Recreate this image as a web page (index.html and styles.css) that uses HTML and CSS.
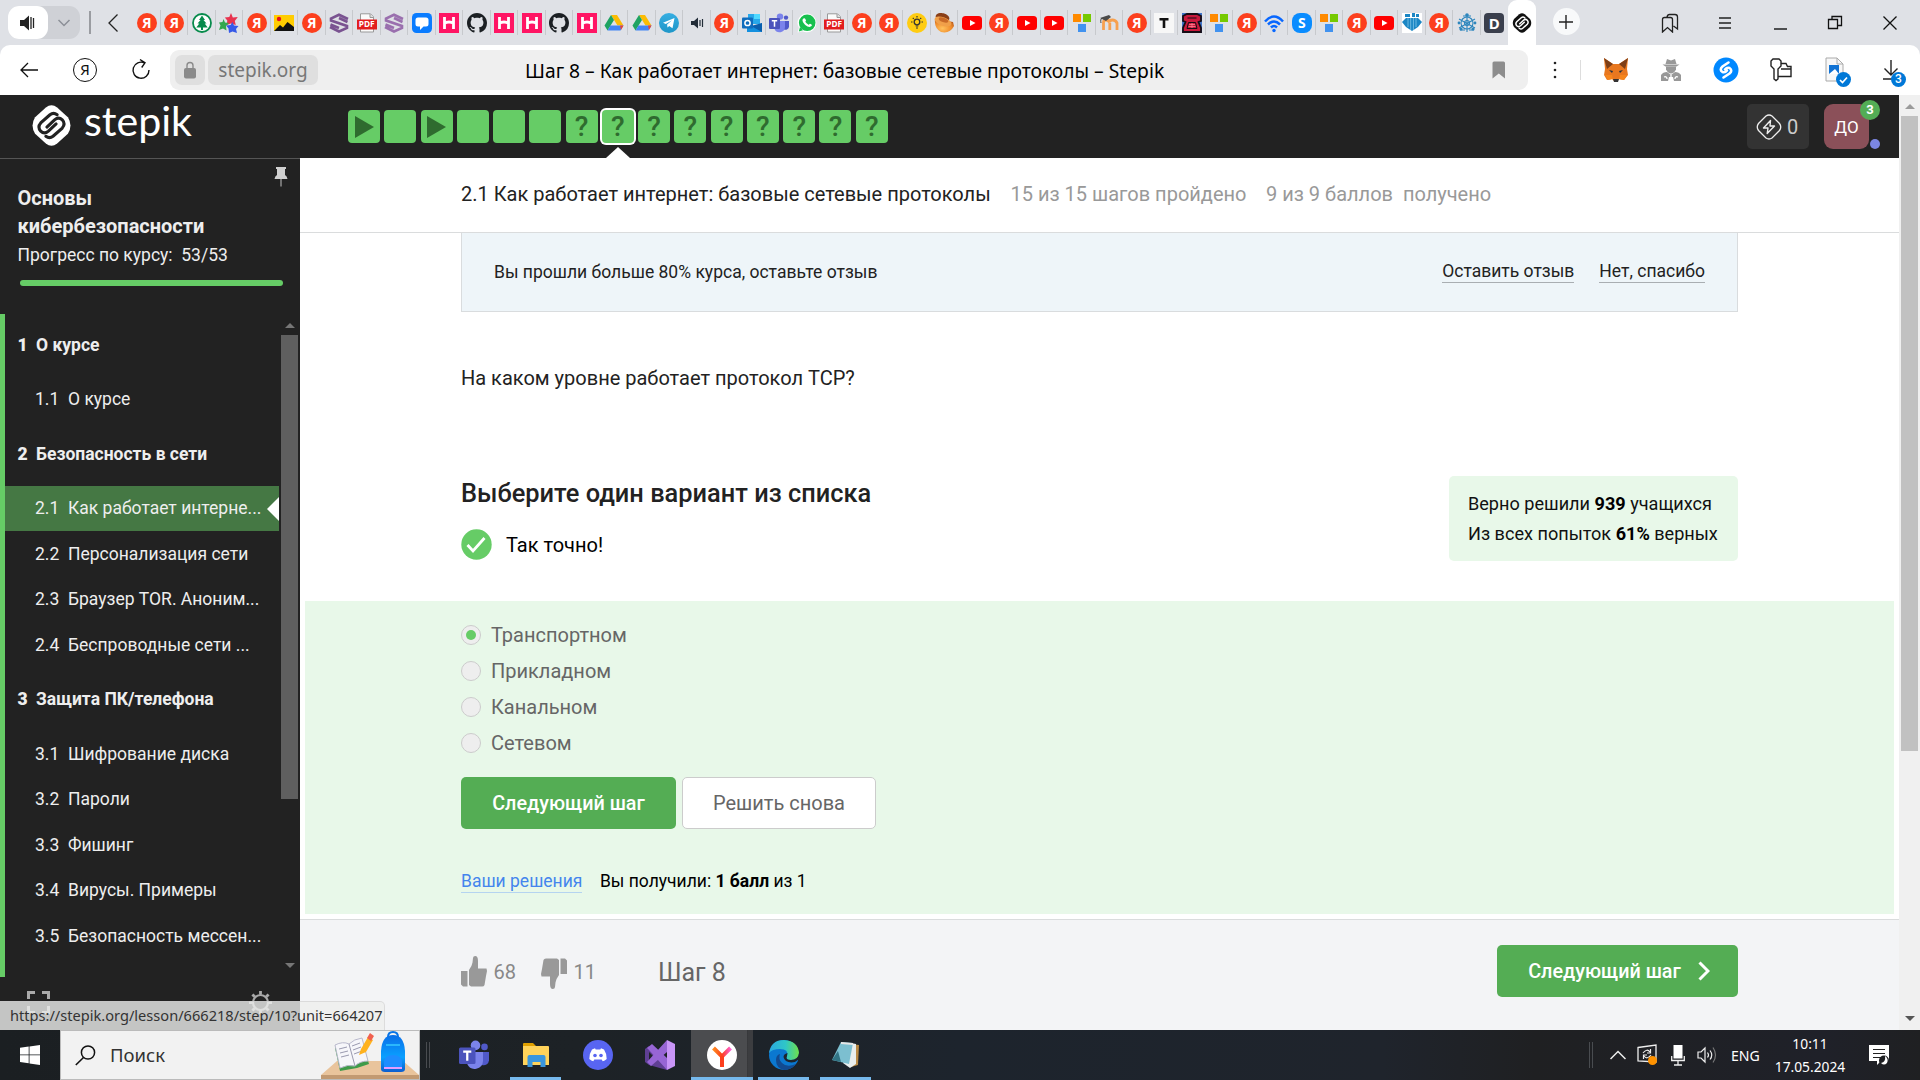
FILE: index.html
```html
<!DOCTYPE html>
<html lang="ru">
<head>
<meta charset="utf-8">
<title>Шаг 8 – Как работает интернет: базовые сетевые протоколы – Stepik</title>
<link rel="stylesheet" href="styles.css">
</head>
<body>
<svg class="sprite" aria-hidden="true">
  <defs>
    <linearGradient id="g-blue" x1="0" y1="0" x2="0" y2="1"><stop offset="0" stop-color="#37aee2"/><stop offset="1" stop-color="#1e96c8"/></linearGradient>
    <linearGradient id="g-edge" x1="0" y1="0" x2="1" y2="0"><stop offset="0" stop-color="#2aa9e0"/><stop offset=".55" stop-color="#2fc6c8"/><stop offset="1" stop-color="#6fe04a"/></linearGradient>
    <linearGradient id="g-y" x1="0" y1="0" x2="1" y2="0"><stop offset="0" stop-color="#ff8a1e"/><stop offset=".5" stop-color="#fc3f1d"/><stop offset="1" stop-color="#ff5fd0"/></linearGradient>
    <linearGradient id="g-bag" x1="0" y1="0" x2="0" y2="1"><stop offset="0" stop-color="#0a6fe8"/><stop offset=".6" stop-color="#0aa0ff"/><stop offset="1" stop-color="#0b5ed0"/></linearGradient>
    <radialGradient id="g-donut" cx=".4" cy=".7" r=".8"><stop offset="0" stop-color="#ffc25e"/><stop offset=".6" stop-color="#ef8a2a"/><stop offset="1" stop-color="#a3481a"/></radialGradient>
  </defs>
  <symbol id="spar" viewBox="0 0 20 20"><circle cx="10" cy="10" r="9" fill="#fff" stroke="#078b4c" stroke-width="1.800"/><path d="M10 2.500 13 7h-1.500l3 3.500h-1.800l3 4h-4.700v2.500h-2v-2.500H4.300l3-4H5.500L8.500 7H7z" fill="#078b4c"/></symbol>
  <symbol id="star" viewBox="0 0 20 20"><path d="M12 0l1.800 4.500 5-.5-3 4 1 4-5-1.500-4 1.500.5-4.500-2.500-3 4.500-.5z" fill="#e8334f"/><path d="M4.500 6l1.500 3.500 4 .5-3 3 .5 4.500-3.500-2-4 1.500 1.500-4.500L0 9.500l3.500-.5z" fill="#34a84e"/><path d="M13.500 9l1.500 3.500 4.500.5-2.500 3 1 4-4.500-1.500-3.500 1.500-.5-4.500-2.500-3 4.500-.5z" fill="#3659e8"/></symbol>
  <symbol id="pic" viewBox="0 0 20 20"><path d="M0 2h20v16H0z" fill="#fc0"/><circle cx="5" cy="6" r="2.200" fill="#e8101c"/><path d="M0 18l6-6 3 2.500L13.500 9 20 14v4z" fill="#111"/></symbol>
  <symbol id="hexs" viewBox="0 0 20 20"><path d="M19 6 10 1.800 2 5.500v2L18 13v2l-8 3.500L1 14M18.500 9 10 5M1.500 11.500 10 15" fill="none" stroke="currentColor" stroke-width="2.600"/></symbol>
  <symbol id="pdfbox" viewBox="0 0 20 20"><path d="M3.500.8h10l3 3V19h-13z" fill="#fafafa" stroke="#999" stroke-width="1"/><path d="M13 1v3.500h3.500" fill="#ddd" stroke="#999"/><path d="M0 6.500h20V16.500H0z" fill="#e21d1d"/></symbol>
  <symbol id="chat" viewBox="0 0 20 20"><rect width="20" height="20" rx="4.500" fill="#0a7cff"/><path d="M6 4.500h8a2.500 2.500 0 0 1 2.500 2.500v4A2.500 2.500 0 0 1 14 13.500h-2.500L8 17v-3.500H6A2.500 2.500 0 0 1 3.500 11V7A2.500 2.500 0 0 1 6 4.500z" fill="#fff"/></symbol>
  <symbol id="hh" viewBox="0 0 20 20"><path d="M0 0h20v20H0z" fill="#ff1564"/><path d="M5.500 4v12M14.500 4v12M5.500 10.500c2-2 7-2 9 0" stroke="#fff" stroke-width="2.800" fill="none"/></symbol>
  <symbol id="git" viewBox="0 0 16 16"><path fill="#1b1f23" d="M8 0C3.580 0 0 3.580 0 8c0 3.540 2.290 6.530 5.470 7.590.4.070.550-.170.550-.380 0-.190-.010-.820-.010-1.490-2.010.370-2.530-.490-2.690-.940-.090-.230-.480-.940-.820-1.130-.280-.150-.680-.520-.010-.530.630-.010 1.080.580 1.230.820.720 1.210 1.870.870 2.330.660.070-.520.280-.870.510-1.070-1.780-.2-3.640-.890-3.640-3.950 0-.870.310-1.590.820-2.150-.080-.2-.360-1.020.080-2.120 0 0 .670-.210 2.200.820.640-.180 1.320-.270 2-.270s1.360.090 2 .270c1.530-1.040 2.200-.820 2.200-.820.440 1.100.160 1.920.080 2.120.510.560.820 1.270.820 2.150 0 3.070-1.870 3.750-3.650 3.950.290.250.540.730.540 1.480 0 1.070-.010 1.930-.010 2.200 0 .210.150.460.550.380A8.010 8.010 0 0 0 16 8c0-4.420-3.580-8-8-8z"/></symbol>
  <symbol id="drive" viewBox="0 0 20 20"><path d="M7 2h6l6.500 10.500h-6z" fill="#fbbc04"/><path d="M7 2l3 5-6.500 10.500L.5 12.500z" fill="#1ea362"/><path d="M3.500 17.500 6.500 12.500h13l-3 5z" fill="#4285f4"/><path d="M16 12.500h3.500L17 17z" fill="#ea4335"/></symbol>
  <symbol id="tg" viewBox="0 0 20 20"><circle cx="10" cy="10" r="10" fill="url(#g-blue)"/><path d="M4 9.800 15.500 5l-2 10.300-3.300-2.400-1.700 1.700-.4-3 5-4.300-6.300 3.800z" fill="#fff"/></symbol>
  <symbol id="snd" viewBox="0 0 20 20"><path d="M4 8h3l4-3.500v11L7 12H4z" fill="#222c38"/><path d="M13 7v6M15.500 6v8" stroke="#222c38" stroke-width="1.200"/></symbol>
  <symbol id="outlook" viewBox="0 0 20 20"><path d="M6 1h12v10H6z" fill="#28a8ea"/><path d="M12 1h6v5h-6z" fill="#50d9ff"/><path d="M5 10l7 4 8-4v9H5z" fill="#1490df"/><path d="M20 10v9L9 13z" fill="#0a5fae"/><rect y="4.500" width="11" height="11" rx="1" fill="#0f6cbd"/><circle cx="5.500" cy="10" r="2.600" fill="none" stroke="#fff" stroke-width="1.500"/></symbol>
  <symbol id="teams" viewBox="0 0 20 20"><circle cx="11" cy="3.600" r="3.200" fill="#7b83eb"/><circle cx="17" cy="4.600" r="2.200" fill="#5059c9"/><path d="M14 8h6v5.500a3.500 3.500 0 0 1-5 3z" fill="#5059c9"/><path d="M6 8h10v6a5.500 5.500 0 0 1-10.500 2z" fill="#7b83eb"/><rect y="5" width="11" height="11" rx="1" fill="#4b53bc"/><path d="M2.800 7.800h5.400M5.500 7.800v6" stroke="#fff" stroke-width="1.500"/></symbol>
  <symbol id="wa" viewBox="0 0 20 20"><path d="M10 .5a9.400 9.400 0 1 1-4.500 17.700L.5 19.500 2 14.800A9.400 9.400 0 0 1 10 .5z" fill="#fff"/><circle cx="10.200" cy="9.800" r="8.300" fill="#18c04f"/><path d="M1.800 18.400 3 14l3 3.300z" fill="#18c04f"/><path d="M6.500 5.500c1.500-1 2 .5 2.500 2 0 .7-1 1-.5 1.600.8 1.300 1.800 2 3 2.600.6.200 1-1.200 1.500-1 1.700.8 2.500 1 1.500 2.400-1.500 1.600-4 .6-6.200-1.200-2.500-2.300-3.800-5-1.800-6.400z" fill="#fff"/></symbol>
  <symbol id="bulb" viewBox="0 0 20 20"><circle cx="10" cy="10" r="10" fill="#fc1"/><circle cx="10" cy="9" r="2.800" fill="none" stroke="#333" stroke-width="1.300"/><path d="M8.700 13h2.600M9 15h2M10 3v1.500M4 9h1.500M14.500 9H16M5.800 4.800l1 1M14.200 4.800l-1 1" stroke="#333" stroke-width="1.200"/></symbol>
  <symbol id="donut" viewBox="0 0 20 20"><path d="M1 6q-1 9 6 13 9 2 13-6l-1-4z" fill="url(#g-donut)"/><ellipse cx="8.500" cy="4.500" rx="7" ry="4.300" transform="rotate(15 8.500 4.500)" fill="#8a3f18"/><ellipse cx="9" cy="8.500" rx="8.800" ry="4.200" transform="rotate(20 9 8.500)" fill="#f0a04a"/><ellipse cx="9.500" cy="7" rx="5" ry="2.200" transform="rotate(20 9.500 7)" fill="#c86a28"/></symbol>
  <symbol id="yt" viewBox="0 0 20 20"><rect y="3" width="20" height="14" rx="3.500" fill="#f00"/><path d="M8 7l5.500 3L8 13z" fill="#fff"/></symbol>
  <symbol id="sq" viewBox="0 0 20 20"><path d="M1 1h8v8H1z" fill="#ff8a00"/><path d="M11 1h8v8h-8z" fill="#76c900"/><path d="M6 11h8v8H6z" fill="#4192ef"/></symbol>
  <symbol id="moodle" viewBox="0 0 20 20"><path d="M4.500 17V9.500q0-2.500 2.500-2.500t3.500 2.500q0-2.500 3-2.500T18 10v7M10.800 17v-7" fill="none" stroke="#f7a04e" stroke-width="2.800"/><path d="M1 5l9-3 2 2-5 4z" fill="#4a4a4a"/><path d="M3 5c-1.500 1-1.500 3-1 5" stroke="#444" fill="none"/></symbol>
  <symbol id="tt" viewBox="0 0 20 20"><path d="M0 0h20v20H0z" fill="#f7f7f7"/><path d="M5.500 6.300h9M10 6v9" stroke="#111" stroke-width="2.600"/></symbol>
  <symbol id="phone" viewBox="0 0 20 20"><path d="M0 0h20v20H0z" fill="#3f74c9"/><path d="M5 1h10l4 2v5l-2.500 1 2.500 6v4H1v-4l2.500-6L1 8V3z" fill="#c9193c" stroke="#160d15" stroke-width="1.800"/><path d="M5.500 5h9M6.500 9.500h7l1.500 6H5z" fill="none" stroke="#160d15" stroke-width="1"/><path d="M7 11.500h6M6.500 13.500h7M10 10v5" stroke="#ff8092" stroke-width=".8"/></symbol>
  <symbol id="wifi" viewBox="0 0 20 20"><path d="M1 8.500Q10-1.500 19 8.500M4 11.500q6-6 12 0M7 14.500q3-3 6 0" fill="none" stroke="#0867ff" stroke-width="2.500"/><circle cx="10" cy="17.500" r="1.700" fill="#0867ff"/></symbol>
  <symbol id="jelly" viewBox="0 0 20 20"><path d="M0 0h20v20H0z" fill="#fff"/><path d="M0 9l4-4h12l4 4-4 5-6 4-6-4zM3 1h5v3H3zM10 0h3v4h-3zM14 1h3v3h-3z" fill="#1b86c4"/><path d="M6 5v9M8.700 5v12M11.400 5v12M14 5v9" stroke="#8fd0ee" stroke-width=".7"/></symbol>
  <symbol id="net" viewBox="0 0 20 20"><g fill="none" stroke="#2d86bd" stroke-width="1.100"><circle cx="10" cy="10" r="6"/><circle cx="10" cy="10" r="2.500"/><path d="M10 1v18M2 6l16 9M18 6 2 15M6 3h8M3 17h5M12 17h5"/></g><g fill="#2d86bd"><circle cx="10" cy="2" r="1.800"/><circle cx="2" cy="10" r="1.400"/><circle cx="18" cy="10" r="1.400"/><circle cx="4" cy="16" r="1.600"/><circle cx="16" cy="16" r="1.600"/></g></symbol>
  <symbol id="stepik" viewBox="0 0 40 40"><path d="M14.500 2.500Q20-1.800 25.500 2.500L36 12q5 8 0 16L25.500 37.500Q20 41.800 14.500 37.500L4 28q-5-8 0-16z" fill="currentColor"/></symbol>
  <symbol id="sswirl" viewBox="0 0 40 40"><path d="M25.500 9.500Q22 6.800 18.500 9.500L9.500 17.500Q6 21.500 9.500 25.500 13 29 17 25.500L24.500 18.500M14.500 30.500Q18 33.200 21.500 30.500L30.500 22.500Q34 18.500 30.500 14.500 27 11 23 14.500L15.500 21.500" fill="none" stroke="currentColor" stroke-width="3" stroke-linecap="round"/></symbol>
</svg>

<div class="tabstrip">
  <div class="media"><span class="media-on"><svg width="18" height="20" viewBox="0 0 18 20"><path d="M1 7h4l5-4.500v15L5 13H1z" fill="#222"/><path d="M12 4v12M14.500 5v10" stroke="#222" stroke-width="1.300"/></svg></span><span class="media-menu"><svg width="14" height="8" viewBox="0 0 14 8"><path d="M1.500 1 7 6.500 12.500 1" fill="none" stroke="#8c9097" stroke-width="1.500"/></svg></span></div>
  <i class="strip-sep"></i>
  <svg class="strip-back" width="12" height="20" viewBox="0 0 12 20"><path d="M10.500 1.500 2 10l8.500 8.500" fill="none" stroke="#222" stroke-width="1.300"/></svg>
  <div class="tabs">
    <span><em class="ya">Я</em></span><span><em class="ya">Я</em></span><span><svg><use href="#spar"/></svg></span><span><svg><use href="#star"/></svg></span><span><em class="ya">Я</em></span><span><svg><use href="#pic"/></svg></span><span><em class="ya">Я</em></span><span><svg class="plum"><use href="#hexs"/></svg></span><span><svg><use href="#pdfbox"/></svg><em class="pdf">PDF</em></span><span><svg class="lilac"><use href="#hexs"/></svg></span><span><svg><use href="#chat"/></svg></span><span><svg><use href="#hh"/></svg></span><span><svg><use href="#git"/></svg></span><span><svg><use href="#hh"/></svg></span><span><svg><use href="#hh"/></svg></span><span><svg><use href="#git"/></svg></span><span><svg><use href="#hh"/></svg></span><span><svg><use href="#drive"/></svg></span><span><svg><use href="#drive"/></svg></span><span><svg><use href="#tg"/></svg></span><span><svg><use href="#snd"/></svg></span><span><em class="ya">Я</em></span><span><svg><use href="#outlook"/></svg></span><span><svg><use href="#teams"/></svg></span><span><svg><use href="#wa"/></svg></span><span><svg><use href="#pdfbox"/></svg><em class="pdf">PDF</em></span><span><em class="ya">Я</em></span><span><em class="ya">Я</em></span><span><svg><use href="#bulb"/></svg></span><span><svg><use href="#donut"/></svg></span><span><svg><use href="#yt"/></svg></span><span><em class="ya">Я</em></span><span><svg><use href="#yt"/></svg></span><span><svg><use href="#yt"/></svg></span><span><svg><use href="#sq"/></svg></span><span><svg><use href="#moodle"/></svg></span><span><em class="ya">Я</em></span><span><svg><use href="#tt"/></svg></span><span><svg><use href="#phone"/></svg></span><span><svg><use href="#sq"/></svg></span><span><em class="ya">Я</em></span><span><svg><use href="#wifi"/></svg></span><span><em class="sk">S</em></span><span><svg><use href="#sq"/></svg></span><span><em class="ya">Я</em></span><span><svg><use href="#yt"/></svg></span><span><svg><use href="#jelly"/></svg></span><span><em class="ya">Я</em></span><span><svg><use href="#net"/></svg></span><span><em class="dd">D</em></span><span class="current"><svg class="dark"><use href="#stepik"/></svg><svg class="over"><use href="#sswirl"/></svg></span>
  </div>
  <span class="newtab"><svg width="14" height="14" viewBox="0 0 14 14"><path d="M7 0v14M0 7h14" stroke="#222" stroke-width="1.400"/></svg></span>
  <div class="winbtns">
    <svg viewBox="0 0 20 20"><path d="M2.500 6.500q0-2 2-2h6q2 0 2 2V19l-5-4.500-5 4.500zM7 4q.5-2.500 2.500-2.500h5.500q2.500 0 2.500 2.500v12l-4-3" fill="none" stroke="#222" stroke-width="1.300"/></svg>
    <svg viewBox="0 0 20 20"><path d="M4 5h12M4 10h12M4 15h12" stroke="#222" stroke-width="1.300"/></svg>
    <svg viewBox="0 0 20 20"><path d="M4 16h13" stroke="#111" stroke-width="1.400"/></svg>
    <svg viewBox="0 0 20 20"><path d="M3.500 6.500h9v9h-9zM7 6V3.500h9.500v9H13" fill="none" stroke="#111" stroke-width="1.300"/></svg>
    <svg viewBox="0 0 20 20"><path d="M3.500 3.500l13 13M16.500 3.500l-13 13" stroke="#111" stroke-width="1.300"/></svg>
  </div>
</div>

<div class="toolbar">
  <div class="nav">
    <svg width="20" height="18" viewBox="0 0 20 18"><path d="M9 2 2 9l7 7M2 9h17" fill="none" stroke="#111" stroke-width="1.300"/></svg>
    <span class="ya-btn">Я</span>
    <svg width="20" height="24" viewBox="0 0 20 24"><path d="M18 12a8 8 0 1 1-4.500-7M9 1.500l5 3.300-3.300 4.700" fill="none" stroke="#111" stroke-width="1.400"/></svg>
  </div>
  <div class="omnibox">
    <span class="lock"><svg width="14" height="18" viewBox="0 0 14 18"><rect x="1" y="7" width="12" height="10.500" rx="2" fill="#8a8a8a"/><path d="M4 8V4.500a3 3 0 0 1 6 0V8" fill="none" stroke="#8a8a8a" stroke-width="1.400"/></svg></span>
    <span class="host">stepik.org</span>
    <span class="doc-title">Шаг 8 – Как работает интернет: базовые сетевые протоколы – Stepik</span>
    <svg class="bookmark" width="14" height="18" viewBox="0 0 14 18"><path d="M.5 2Q.5.500 2 .500h9.500Q13 .500 13 2v15.500L6.800 12.500.5 17.500z" fill="#8d8d8d"/></svg>
  </div>
  <div class="exts">
    <svg class="dots" viewBox="0 0 24 24"><g fill="#222"><circle cx="12" cy="5.500" r="1.200"/><circle cx="12" cy="12" r="1.200"/><circle cx="12" cy="18.500" r="1.200"/></g></svg>
    <i class="ext-sep"></i>
    <svg viewBox="0 0 26 26"><path d="M1 1l9 6h6l9-6-1 11 1 6-4 5-6-1-2 2h-2l-2-2-5 1-3-5 1-6z" fill="#e8771f"/><path d="M1 1l9 6-6 5zM25 1l-9 6 6 5z" fill="#7e3f17"/><path d="M6 13l4 1-1 2zM20 13l-4 1 1 2z" fill="#23303f"/><path d="M10 22h6l-1 3h-4z" fill="#333"/><path d="M2 18l7 0 1 4-5 1zM24 18l-7 0-1 4 5 1z" fill="#f6851b"/></svg>
    <svg viewBox="0 0 26 26"><g fill="#989898"><path d="M9 2l4 1.500L17 2l1.500 5h-11zM4.500 7.500h17l-3 2h-11z"/><path d="M8 9.500h10v3q-2 4-5 4t-5-4z"/><path d="M3 18q2-3 6-3l4 3 4-3q4 0 6 3v6h-7l-1-4h-4l-1 4H3z"/></g><path d="M6 20q3-1 3 2M20 20q-3-1-3 2M13 18v6" stroke="#fff" stroke-width="1.300" fill="none"/></svg>
    <svg viewBox="0 0 26 26"><circle cx="13" cy="13" r="12.500" fill="#08f"/><path d="M15.500 5.500l-6 4q-3.500 3 0 5.500 2.500 1 4.500-1.500M10.500 20.500l6-4q3.500-3 0-5.500-2.500-1-4.500 1.500" fill="none" stroke="#fff" stroke-width="2.600" stroke-linecap="round"/></svg>
    <svg viewBox="0 0 26 26"><path d="M5 2h6l2 2v5l-3 3v10l-2 1.500L6 22V12L3 9V4zM13 6.500h5l1.500 3H23v10H10M13 12h10" fill="none" stroke="#222" stroke-width="1.400"/></svg>
    <span class="doc-ext"><svg viewBox="0 0 26 26"><path d="M3 1h11l6 6v17H3z" fill="#f8f8f8" stroke="#aaa"/><path d="M14 1v6h6" fill="none" stroke="#aaa"/><path d="M6 8h10v9H6z" fill="#1273d4"/><path d="M6 17l6-5 4 5z" fill="#fff"/></svg><b><svg width="9" height="8" viewBox="0 0 9 8"><path d="M1 4l2.500 2.500L8 1.500" fill="none" stroke="#fff" stroke-width="1.700"/></svg></b></span>
    <span class="doc-ext"><svg viewBox="0 0 26 26"><path d="M13 3v15M6.500 11.500 13 18l6.500-6.500M5 22h14" fill="none" stroke="#222" stroke-width="1.400"/></svg><b>3</b></span>
  </div>
</div>

<div class="page">
  <div class="app">
    <header class="top">
      <div class="brand"><span class="brand-mark"><svg><use href="#stepik"/></svg><svg class="over"><use href="#sswirl"/></svg></span>
        <svg class="wordmark" width="112" height="50" viewBox="0 0 112 50"><text x="0" y="35" font-size="40" textLength="108" lengthAdjust="spacingAndGlyphs">stepik</text></svg></div>
      <div class="steps">
        <a><i class="play"></i></a><a></a><a><i class="play"></i></a><a></a><a></a><a></a><a>?</a><a class="active">?</a><a>?</a><a>?</a><a>?</a><a>?</a><a>?</a><a>?</a><a>?</a>
      </div>
      <div class="knowledge"><svg width="26" height="26" viewBox="0 0 26 26"><path d="M10 2Q13 0 16 2l7.500 7.500q2.500 3.500 0 7L16 24q-3 2-6 0L2.500 16.500q-2.500-3.500 0-7z" fill="none" stroke="#eee" stroke-width="1.300"/><path d="M14.500 6.500 7.500 14h4.500l-.8 5.500L18.500 12H14z" fill="none" stroke="#eee" stroke-width="1.400" stroke-linejoin="round"/></svg><span>0</span></div>
      <div class="avatar">ДО<b>3</b><i></i></div>
    </header>
    <div class="body">
      <aside class="side">
        <svg class="pin" width="14" height="20" viewBox="0 0 14 20"><path d="M2 0h10v2h-1v6q2 1 2.500 4H.500Q1 9 3 8V2H2z" fill="#d0d0d0"/><path d="M7 12v7.500" stroke="#888" stroke-width="1.600"/></svg>
        <h2>Основы кибербезопасности</h2>
        <p>Прогресс по курсу:&nbsp; 53/53</p>
        <div class="bar"></div>
        <div class="toc">
          <div class="toc-list">
            <div class="sec"><b>1</b>О курсе</div>
            <div class="les"><b>1.1</b>О курсе</div>
            <div class="sec"><b>2</b>Безопасность в сети</div>
            <div class="les on"><b>2.1</b>Как работает интерне...</div>
            <div class="les"><b>2.2</b>Персонализация сети</div>
            <div class="les"><b>2.3</b>Браузер TOR. Аноним...</div>
            <div class="les"><b>2.4</b>Беспроводные сети ...</div>
            <div class="sec"><b>3</b>Защита ПК/телефона</div>
            <div class="les"><b>3.1</b>Шифрование диска</div>
            <div class="les"><b>3.2</b>Пароли</div>
            <div class="les"><b>3.3</b>Фишинг</div>
            <div class="les"><b>3.4</b>Вирусы. Примеры</div>
            <div class="les"><b>3.5</b>Безопасность мессен...</div>
          </div>
          <div class="toc-scroll"><i class="up"></i><div class="thumb"></div><i class="down"></i></div>
        </div>
        <div class="side-foot">
          <svg width="23" height="23" viewBox="0 0 23 23"><path d="M1.500 8V1.500H8M15 1.500h6.500V8M21.500 15v6.500H15M8 21.500H1.500V15" fill="none" stroke="#aaa" stroke-width="3"/></svg>
          <svg width="23" height="23" viewBox="0 0 23 23"><circle cx="11.500" cy="11.500" r="7.500" fill="none" stroke="#aaa" stroke-width="2.200"/><path d="M11.500 0v3.500M11.500 19.500V23M0 11.500h3.500M19.500 11.500H23M3.400 3.400l2.400 2.400M17.200 17.200l2.400 2.400M19.600 3.400l-2.400 2.400M5.800 17.200l-2.400 2.400" stroke="#aaa" stroke-width="2.800"/></svg>
        </div>
      </aside>
      <main class="main">
        <div class="lesson-head"><h1>2.1 Как работает интернет: базовые сетевые протоколы</h1><span class="done">15 из 15 шагов пройдено</span><span class="pts">9 из 9 баллов&nbsp; получено</span></div>
        <div class="banner"><span class="msg">Вы прошли больше 80% курса, оставьте отзыв</span><a class="a1">Оставить отзыв</a><a class="a2">Нет, спасибо</a></div>
        <p class="question">На каком уровне работает протокол TCP?</p>
        <section class="quiz-head">
          <div>
            <h3>Выберите один вариант из списка</h3>
            <div class="verdict"><svg width="31" height="31" viewBox="0 0 31 31"><circle cx="15.500" cy="15.500" r="15.200" fill="#6c6"/><path d="M6.500 16l5.500 6L23.500 9" fill="none" stroke="#fff" stroke-width="2.800"/></svg><span>Так точно!</span></div>
          </div>
          <div class="stats"><span>Верно решили <b>939</b> учащихся</span><span>Из всех попыток <b>61%</b> верных</span></div>
        </section>
        <section class="attempt">
          <label class="checked"><i></i><span>Транспортном</span></label>
          <label><i></i><span>Прикладном</span></label>
          <label><i></i><span>Канальном</span></label>
          <label><i></i><span>Сетевом</span></label>
          <div class="actions"><button class="next"><span>Следующий шаг</span></button><button class="again"><span>Решить снова</span></button></div>
          <div class="score"><a>Ваши решения</a><span>Вы получили: <b>1 балл</b> из 1</span></div>
        </section>
        <footer class="foot">
          <svg class="like" width="26" height="31" viewBox="0 0 26 31"><path d="M0 15h6.500v15.500H2L0 28.500zM8 29V14q3-4 3.500-7.500L12 2q.2-2 2.200-2Q17 0 17 5v7.500h8.500L26 15l-1 5-1.500 9q-.5 1.500-2.500 1.500H10z" fill="#999"/></svg>
          <span class="votes">68</span>
          <svg class="dis" width="26" height="31" viewBox="0 0 26 31"><path d="M26 16h-6.500V.500H24L26 2.500zM18 2v15q-3 4-3.500 7.500L14 29q-.2 2-2.200 2Q9 31 9 26v-7.500H.500L0 16l1-5L2.500 2Q3 .500 5 .500h11z" fill="#999"/></svg>
          <span class="votes">11</span>
          <span class="step-no">Шаг 8</span>
          <button class="next big"><span>Следующий шаг</span><svg width="12" height="20" viewBox="0 0 12 20"><path d="M1.500 1.500 10 10l-8.500 8.500" fill="none" stroke="#fff" stroke-width="3"/></svg></button>
        </footer>
      </main>
    </div>
  </div>
  <div class="vscroll"><i class="up"></i><div class="thumb"></div><i class="down"></i></div>
  <div class="status">https://stepik.org/lesson/666218/step/10?unit=664207</div>
</div>

<div class="taskbar">
  <span class="start"><svg width="20" height="20" viewBox="0 0 20 20"><path d="M0 2.800 8.700 1.500v8H0zM9.500 1.400 20 0v9.500H9.500zM0 10.300h8.700v8L0 17zM9.500 10.300H20V20L9.500 18.500z" fill="#fff"/></svg></span>
  <div class="search">
    <svg width="21" height="21" viewBox="0 0 21 21"><circle cx="13" cy="7.500" r="6.600" fill="none" stroke="#111" stroke-width="1.500"/><path d="M8.500 12.500.800 20" stroke="#111" stroke-width="1.600"/></svg>
    <span>Поиск</span>
    <svg class="scene" width="98" height="48" viewBox="0 0 98 48"><path d="M0 44 16 30h66l16 14z" fill="#e9c49c"/><path d="M0 44h98v4H0z" fill="#c29a72"/><path d="M14 17l14-3 13-4 7 23-12 4-17 3z" fill="#3f9b4a"/><path d="M14 14q8-4 14-1 5-5 13-6l6 23q-8 0-13 5-7-2-15 2z" fill="#f6f6fa" stroke="#b9b9cc"/><path d="M28 13l6 22M18 18l8-2M19 22l8-2M20 26l8-2M31 15l8-3M32 19l8-3M33 23l8-3" stroke="#9a9ab0"/><path d="M38 24l2-6L47 6l5 3-7 12z" fill="#ffb21f"/><path d="M46 7l3-5 4 3-3 5z" fill="#f0604f"/><path d="M67 6q0-5 5-5t5 5" fill="none" stroke="#0874e6" stroke-width="2"/><path d="M60 20Q61 4 72 4t12 16v18q0 3-4 3H64q-4 0-4-3z" fill="url(#g-bag)"/><path d="M63 32q0-8 9-8t9 8v6H63z" fill="#1e8dff"/><path d="M63 36h18v2H63z" fill="#e59cff"/><path d="M65 14h14" stroke="#37c8ff" stroke-width="1.500"/></svg>
  </div>
  <i class="grip"></i>
  <div class="apps">
    <span><svg viewBox="0 0 20 20"><use href="#teams"/></svg></span>
    <span class="open"><svg viewBox="0 0 30 30"><path d="M2 4q0-1 1-1h9l3 3H2z" fill="#e0a000"/><path d="M2 6h25q1 0 1 1v18H2z" fill="#ffd35a"/><path d="M6.500 27V17q0-2 2-2h14q2 0 2 2v10h-5v-5h-8v5z" fill="#3a96dd"/></svg></span>
    <span><svg viewBox="0 0 30 30"><circle cx="15" cy="15" r="15" fill="#5865f2"/><path d="M9 9.500l3-1.200.7 1.200h4.600l.7-1.200 3 1.200q3 4.500 2.700 9.500-2 1.700-4 2.300l-1-1.900h-7.400l-1 1.900q-2-.6-4-2.300Q6 14 9 9.500z" fill="#fff"/><circle cx="12" cy="15.500" r="1.800" fill="#5865f2"/><circle cx="18" cy="15.500" r="1.800" fill="#5865f2"/></svg></span>
    <span><svg viewBox="0 0 30 30"><path d="M0 9l4-3 18 18v6L4 25l-4-3z" fill="#5f3f93"/><path d="M4 12l5 5-5 5z" fill="#20242a"/><path d="M22 0l8 4v22l-8 4z" fill="#c895f7"/><path d="M2 8l5-4 15 14v12L4 10zM22 0v12L6 26l-4-4z" fill="#9765d5"/></svg></span>
    <span class="open focus"><svg viewBox="0 0 30 30"><circle cx="15" cy="15" r="15" fill="#fff"/><path d="M6.500 8 15 16.500 23.500 8" fill="none" stroke="url(#g-y)" stroke-width="4"/><path d="M15 16v11" stroke="#fc3f1d" stroke-width="4"/></svg></span>
    <span class="open"><svg viewBox="0 0 30 30"><circle cx="15" cy="15" r="15" fill="#0b78d0"/><path d="M0 13Q2 0 15 0q14 1 15 13 0 7-8 7-6 0-4-4 2-7-7-7Q3 9 0 13z" fill="url(#g-edge)"/><path d="M11 14q-2 5 2 9 5 5 14 1-5 6-12 6Q7 28 7 20q0-5 4-6z" fill="#124a90"/><path d="M18.500 13q-4 1-4 4 1 5 8 5.500 4 0 7-3l-.5 2.500H30v-9q-1 7-8 7-6 0-4-4z" fill="#1e252d"/></svg></span>
    <span class="open"><svg viewBox="0 0 30 30"><path d="M20 4l8 1-1 20-7 2z" fill="#b98a45"/><path d="M20 3l5 1 0 20-6 4-7-5z" fill="#e9eeee"/><path d="M10 2l12 1-4 21L1 20z" fill="#7cbfd0"/><path d="M7 11 1 20l9 2z" fill="#327484"/><path d="M10 2l12 1v2L10 4z" fill="#e6e6e6"/></svg></span>
  </div>
  <div class="tray">
    <i class="grip"></i>
    <svg class="t1" width="16" height="10" viewBox="0 0 16 10"><path d="M.5 9 8 1.500 15.500 9" fill="none" stroke="#eee" stroke-width="1.500"/></svg>
    <svg class="t2" width="22" height="22" viewBox="0 0 22 22"><path d="M1 3.500 19 1v17L1 17z" fill="none" stroke="#eee" stroke-width="1.300"/><path d="M6 9q4-5 7-1M13.500 5v4H10M14 11q-4 5-7 1M6.500 15v-4H10" fill="none" stroke="#eee" stroke-width="1.200"/><circle cx="15.500" cy="16.500" r="4.500" fill="#ff9200"/></svg>
    <svg class="t3" width="14" height="21" viewBox="0 0 14 21"><path d="M2.500 0h9v13.500h-9z" fill="#fff"/><path d="M.7 11v4.500h12.600V11M7 15.500V20M3 20h8" fill="none" stroke="#eee" stroke-width="1.300"/></svg>
    <svg class="t4" width="20" height="18" viewBox="0 0 20 18"><path d="M1 6h3l4-4v14l-4-4H1z" fill="none" stroke="#eee" stroke-width="1.200"/><path d="M10.500 6.500q2 2.500 0 5M13 4.500q3.500 4.500 0 9" fill="none" stroke="#eee" stroke-width="1.200"/><path d="M16 1.500q5 7.500 0 15" fill="none" stroke="#777" stroke-width="1.200"/></svg>
    <span class="lang">ENG</span>
    <div class="clock"><span>10:11</span><span>17.05.2024</span></div>
    <svg class="t5" width="21" height="21" viewBox="0 0 21 21"><path d="M0 0h20v16h-8l-4 4v-4H0z" fill="#fff"/><path d="M4 4.500h12M4 8.500h12M4 12.500h8" stroke="#222" stroke-width="1.100"/><circle cx="15" cy="15.500" r="5" fill="#1e1f22"/><path d="M16 11q4 3 2 7-3 3-6 0 5-1 4-7z" fill="#fff"/></svg>
  </div>
</div>
</body>
</html>
```
FILE: styles.css
```css
* { box-sizing: border-box; }
html, body { margin: 0; padding: 0; }
body { width: 1920px; height: 1080px; overflow: hidden; display: flex; flex-direction: column; background: #fff; color: #222; font-family: Roboto, "Liberation Sans", sans-serif; }
h1, h2, h3, p { margin: 0; font-weight: 400; }
i, em { font-style: normal; }
svg { display: block; flex: none; }
.sprite { position: absolute; width: 0; height: 0; }

/* Browser tab strip */
.tabstrip { height: 56px; margin-bottom: -11px; flex: none; display: flex; align-items: flex-start; background: #dfe1e6; padding-left: 8px; }
.media { margin-top: 6px; width: 72px; height: 33px; display: flex; background: #cfd1d6; border-radius: 11px; }
.media-on { width: 40px; display: flex; align-items: center; justify-content: center; background: #fff; border-radius: 11px; }
.media-menu { width: 32px; display: flex; align-items: center; justify-content: center; }
.strip-sep { width: 2px; height: 23px; margin: 11px 0 0 9px; background: #9a9ca1; }
.strip-back { margin: 13px 0 0 16px; }
.tabs { display: flex; margin-left: 14px; }
.tabs > span { position: relative; width: 27.500px; height: 45px; display: flex; align-items: center; justify-content: center; }
.tabs > span::after { content: ""; position: absolute; right: 0; top: 10px; width: 1px; height: 25px; background: #c7c9cd; }
.tabs > span:nth-last-child(2)::after, .tabs > span.current::after { display: none; }
.tabs svg { width: 20px; height: 20px; margin-top: 1px; }
.tabs em { width: 20px; height: 20px; margin-top: 1px; color: #fff; font: 700 14px/20px "Noto Sans", "Open Sans", sans-serif; text-align: center; }
.tabs .ya { background: #fc3f1d; border-radius: 10px; }
.tabs .sk { background: #0a8cff; border-radius: 8px; }
.tabs .dd { background: #3a3f4d; border-radius: 4px; font-size: 15px; }
.tabs .pdf { position: absolute; left: 3.750px; top: 13px; font-size: 8.300px; }
.plum { color: #7a5391; }
.lilac { color: #9a6fae; }
.tabs > .current { background: #fff; border-radius: 9px 9px 0 0; }
.dark { color: #111; }
.tabs .over { position: absolute; color: #fff; }
.newtab { margin: 8px 0 0 17px; width: 27px; height: 27px; border-radius: 14px; background: #f8f9fa; display: flex; align-items: center; justify-content: center; }
.winbtns { display: flex; gap: 35.200px; margin: 13px 0 0 80px; }
.winbtns svg { width: 20px; height: 20px; }

/* Browser toolbar */
.toolbar { position: relative; height: 50px; flex: none; display: flex; align-items: center; background: #fff; border-radius: 10px 10px 0 0; }
.nav { width: 170px; flex: none; display: flex; align-items: center; gap: 34px; padding-left: 19px; }
.ya-btn { width: 24px; height: 24px; border: 1.300px solid #111; border-radius: 12px; color: #111; font: 15px/21px "Noto Sans", sans-serif; text-align: center; }
.omnibox { width: 1358px; flex: none; height: 40px; display: flex; align-items: center; background: #efefef; border-radius: 9px; padding-left: 5px; font-family: "Noto Sans", "Open Sans", sans-serif; font-size: 19.250px; }
.lock { width: 30px; height: 30px; border-radius: 7px; background: #dfdfdf; display: flex; align-items: center; justify-content: center; margin-right: 3px; }
.host { width: 110px; height: 30px; line-height: 30px; border-radius: 7px; background: #dfdfdf; color: #777; text-align: center; font-size: 19px; }
.doc-title { margin-left: 207px; width: 642px; color: #000; white-space: nowrap; }
.bookmark { margin-left: 325px; }
.exts { display: flex; align-items: center; padding-left: 14px; }
.exts > svg, .doc-ext > svg { width: 26px; height: 26px; }
.exts > svg, .exts > .doc-ext { margin-right: 29px; }
.exts > .dots { margin-right: 12px; }
.ext-sep { width: 1px; height: 20px; background: #ddd; margin-right: 22px; }
.doc-ext { position: relative; }
.doc-ext b { position: absolute; left: 13px; top: 15px; width: 15px; height: 15px; border-radius: 8px; background: #0078d7; color: #fff; font-size: 12px; line-height: 15px; font-weight: 500; display: flex; align-items: center; justify-content: center; }

/* Page area */
.page { position: relative; height: 935px; flex: none; display: flex; }
.app { width: 1899px; display: flex; flex-direction: column; }
.top { height: 63px; background: #222; display: flex; padding-left: 31px; flex: none; }
.brand { width: 317px; display: flex; padding-top: 10px; color: #fff; }
.brand-mark { position: relative; width: 41px; height: 41px; }
.brand-mark svg { width: 41px; height: 41px; }
.brand-mark .over { position: absolute; left: 0; top: 0; color: #222; }
.wordmark { margin: -4px 0 0 12px; fill: #fff; font-family: Lato, sans-serif; }
.steps { display: flex; gap: 4.270px; padding-top: 15px; width: 1399px; }
.steps a { width: 32px; height: 33px; border-radius: 4px; background: #6c6; color: #2f6b2f; font-size: 28px; font-weight: 500; line-height: 33px; text-align: center; display: flex; align-items: center; justify-content: center; flex: none; }
.steps .active { position: relative; box-shadow: 0 0 0 2px #fff; }
.steps .active::after { content: ""; position: absolute; left: 4px; top: 37px; border: 12px solid transparent; border-top: 0; border-bottom: 11px solid #fff; }
.play { border: 11px solid transparent; border-left: 19px solid #2f6b2f; border-right: 0; }
.knowledge { margin-top: 9px; width: 62px; height: 45px; border-radius: 5px; background: #333; display: flex; align-items: center; padding-left: 9px; gap: 5px; color: #ccc; font-size: 20px; }
.avatar { position: relative; margin: 9px 0 0 15px; width: 45px; height: 45px; border-radius: 9px; background: #8b5059; color: #fff; font-size: 17px; line-height: 46px; text-align: center; }
.avatar b { position: absolute; right: -11px; top: -4px; width: 20px; height: 20px; border-radius: 10px; background: #53ad55; font-size: 13px; line-height: 20px; }
.avatar i { position: absolute; right: -11px; bottom: 0; width: 10px; height: 10px; border-radius: 5px; background: #7b86e2; }
.body { display: flex; height: 872px; }

/* Course sidebar */
.side { width: 300px; background: #222; border-top: 1px solid #555; color: #eee; display: flex; flex-direction: column; flex: none; }
.pin { margin: 8px 0 0 274px; }
.side h2 { margin: -3px 40px 0 17.500px; font-size: 20px; line-height: 28px; font-weight: 700; }
.side p { margin: 1px 0 0 17.500px; font-size: 17.500px; line-height: 28px; }
.bar { margin: 11px 0 28px 20px; width: 263px; height: 6px; border-radius: 3px; background: #6c6; }
.toc { height: 663px; border-left: 5px solid #6c6; display: flex; flex: none; }
.toc-list { width: 274px; }
.sec, .les { display: flex; align-items: center; white-space: nowrap; font-size: 17.500px; }
.sec { height: 63.200px; padding: 0 0 1px 12.500px; font-weight: 700; }
.sec b { width: 18.500px; }
.les { height: 45.550px; padding: 0 0 1px 30px; }
.les b { width: 33px; font-weight: 400; }
.on { position: relative; background: #457844; }
.on::after { content: ""; position: absolute; right: 0; top: 11px; border: 12px solid transparent; border-left: 0; border-right: 12px solid #fff; }
.toc-scroll { margin-left: 2px; width: 17px; display: flex; flex-direction: column; align-items: center; }
.toc-scroll .up { margin-top: 9px; border: 5px solid transparent; border-top: 0; border-bottom-color: #777; }
.toc-scroll .thumb { margin-top: 7px; width: 17px; height: 464px; background: #5f5f5f; }
.toc-scroll .down { margin-top: 164px; border: 5px solid transparent; border-bottom: 0; border-top-color: #777; }
.side-foot { display: flex; justify-content: space-between; padding: 14px 28px 0 27px; }

/* Lesson */
.main { width: 1599px; display: flex; flex-direction: column; }
.lesson-head { height: 75px; border-bottom: 1px solid #dadcdd; display: flex; align-items: center; padding: 0 0 2px 161px; font-size: 20px; color: #999; white-space: nowrap; }
.lesson-head h1 { width: 549.500px; font-size: 20px; color: #222; }
.done { width: 255.500px; }
.banner { margin-left: 161px; width: 1277px; height: 79px; background: #eef5f9; border: 1px solid #d9dcde; border-top: 0; display: flex; align-items: center; padding: 0 32px; font-size: 17.520px; color: #222; white-space: nowrap; }
.banner .msg { flex: 1; }
.banner a { border-bottom: 1px solid #a9aeb2; margin-left: 25px; line-height: 21px; }
.question { margin: 52px 0 0 161px; font-size: 20px; line-height: 28px; }
.quiz-head { margin: 84px 161px 0; display: flex; justify-content: space-between; height: 125px; }
.quiz-head h3 { font-size: 25.400px; font-weight: 500; line-height: 35px; white-space: nowrap; }
.verdict { display: flex; align-items: center; gap: 14px; margin-top: 18px; font-size: 20px; color: #000; }
.verdict span { padding-top: 1px; }
.stats { width: 289px; height: 85px; border-radius: 5px; background: #e8f8e9; padding: 13px 0 0 19px; font-size: 18.100px; line-height: 30px; color: #111; display: flex; flex-direction: column; white-space: nowrap; }
.stats b { color: #000; }
.attempt { margin-left: 5px; width: 1589px; height: 313px; padding: 16px 0 0 156px; background: #e8f8e9; }
.attempt label { display: flex; align-items: center; gap: 10px; height: 36px; font-size: 20px; color: #666; }
.attempt label i { width: 20px; height: 20px; margin-bottom: 1px; border-radius: 10px; border: 1px solid #ccc; background: #eee; display: flex; align-items: center; justify-content: center; }
.checked i::after { content: ""; width: 10px; height: 10px; border-radius: 5px; background: #6c6; }
.actions { display: flex; gap: 6px; margin-top: 16px; }
button { height: 52px; border: 0; border-radius: 5px; padding: 0; font: 400 20px Roboto, sans-serif; display: flex; align-items: center; justify-content: center; }
.next { width: 215px; background: #54ad54; color: #fff; font-weight: 500; font-size: 19.800px; }
.again { width: 194px; background: #fff; border: 1px solid #ccc; color: #666; }
.score { display: flex; gap: 17.500px; margin-top: 41px; font-size: 17.500px; line-height: 22px; color: #000; }
.score a { color: #4485ed; border-bottom: 1px solid #b5d4f0; }
.foot { margin-top: 5px; height: 111px; background: #f3f4f6; border-top: 1px solid #dadcdd; display: flex; align-items: center; padding: 0 161px 8px; color: #888; font-size: 20px; }
.votes { margin-left: 6.500px; padding-top: 2px; }
.dis { margin-left: 25px; margin-top: 4px; }
.step-no { margin-left: 62px; padding-top: 2px; font-size: 25px; color: #666; flex: 1; }
.big { width: 241px; gap: 17px; padding-left: 3px; }

/* Page scrollbar and link status */
.vscroll { width: 21px; background: #f0f0f0; display: flex; flex-direction: column; align-items: center; }
.vscroll .up { margin-top: 9px; border: 5px solid transparent; border-top: 0; border-bottom-color: #9a9a9a; }
.vscroll .thumb { margin-top: 7px; width: 17px; height: 635px; background: #c1c1c1; }
.vscroll .down { margin-top: 265px; border: 5px solid transparent; border-bottom: 0; border-top-color: #555; }
.status { position: absolute; left: 0; bottom: 0; width: 385px; height: 29px; padding-left: 10px; border: 1px solid rgba(200, 200, 200, .5); border-left: 0; border-bottom: 0; border-radius: 0 5px 0 0; background: rgba(238, 239, 237, .8); color: #333; font: 14.600px/27px "Noto Sans", "Open Sans", sans-serif; white-space: nowrap; }

/* Windows taskbar */
.taskbar { height: 50px; flex: none; display: flex; background: linear-gradient(90deg, #1b1f22 0, #1d2226 30%, #1d242d 50%, #1f242c 72%, #1f2022 80%, #1f2129 95%, #1f2022 100%); color: #fff; }
.start { width: 60px; display: flex; align-items: center; justify-content: center; }
.search { width: 360px; background: #f2f2f2; border: 1px solid #bbb; display: flex; align-items: center; padding-left: 14px; font: 18.500px "Noto Sans", "Open Sans", sans-serif; color: #333; }
.search span { margin-left: 14px; padding-bottom: 2px; flex: 1; }
.scene { align-self: flex-end; }
.grip { align-self: center; width: 4px; height: 26px; border: 1px solid #494c50; border-width: 0 1px; margin-left: 6px; }
.apps { display: flex; margin-left: 13px; }
.apps span { width: 62px; display: flex; align-items: center; justify-content: center; position: relative; }
.apps svg { width: 30px; height: 30px; }
.open::after { content: ""; position: absolute; bottom: 0; left: 5px; right: 6px; height: 3px; background: #76b9ed; }
.focus { background: linear-gradient(90deg, #4b4c4f 56px, #333437 56px, #3c3d40 57px); }
.focus::after { left: 0; right: 0; }
.tray { display: flex; align-items: center; margin-left: auto; width: 331px; font-family: "Noto Sans", "Open Sans", sans-serif; border-right: 0; }
.tray .grip { margin-left: 0; }
.t1 { margin-left: 17px; }
.t2 { margin-left: 11px; }
.t3 { margin-left: 12px; }
.t4 { margin-left: 12px; }
.lang { margin-left: 14px; width: 29px; font-size: 15px; transform: scaleX(.94); transform-origin: left; }
.clock { margin-left: 6px; width: 88px; display: flex; flex-direction: column; align-items: center; font-size: 13.800px; line-height: 23px; padding-bottom: 0; }
.t5 { margin-left: 15px; }
```
